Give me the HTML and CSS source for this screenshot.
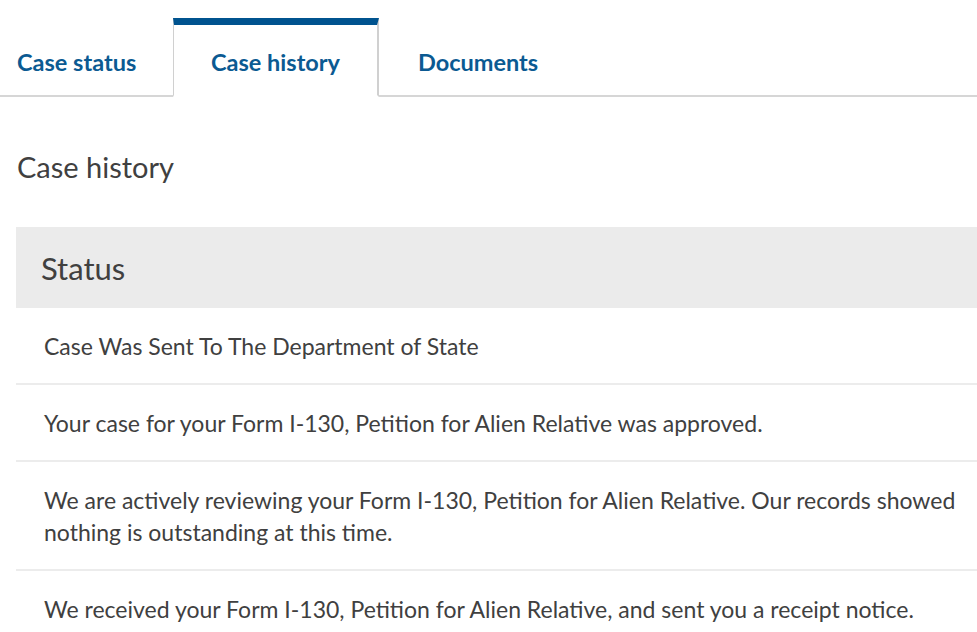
FILE: index.html
```html
<!DOCTYPE html>
<html lang="en">
<head>
<meta charset="utf-8">
<title>Case history</title>
<link rel="stylesheet" href="styles.css">
</head>
<body>
<nav class="tabs">
  <a class="tab tab-first" href="#">Case status</a>
  <a class="tab tab-active" href="#">Case history</a>
  <a class="tab tab-last" href="#">Documents</a>
  <span class="tab-fill"></span>
</nav>
<main class="content">
  <h2 class="page-title">Case history</h2>
  <section class="history">
    <div class="history-head">Status</div>
    <div class="history-row">Case Was Sent To The Department of State</div>
    <div class="history-row">Your case for your Form I-130, Petition for Alien Relative was approved.</div>
    <div class="history-row">We are actively reviewing your Form I-130, Petition for Alien Relative. Our records showed nothing is outstanding at this time.</div>
    <div class="history-row history-row-last">We received your Form I-130, Petition for Alien Relative, and sent you a receipt notice.</div>
  </section>
</main>
</body>
</html>
```

FILE: styles.css
```css
* { box-sizing: border-box; }
html, body { margin: 0; padding: 0; background: #fff; }
body {
  font-family: "Lato", "Liberation Sans", sans-serif;
  color: #404040;
  overflow: hidden;
}
.tabs {
  display: flex;
  align-items: stretch;
  padding-top: 18px;
  height: 97px;
}
.tab {
  display: flex;
  align-items: center;
  padding-top: 11px;
  color: #0b5a92;
  font-weight: 700;
  font-size: 23.5px;
  text-decoration: none;
  border-bottom: 2px solid #d6d6d6;
}
.tab-first { width: 173px; padding-left: 17px; }
.tab-active {
  width: 206px;
  justify-content: center;
  border-top: 7px solid #00538f;
  border-left: 1px solid #d0d0d0;
  border-right: 2px solid #d0d0d0;
  border-bottom: 2px solid transparent;
  padding-top: 4px;
}
.tab-last { padding-left: 39px; padding-right: 39px; }
.tab-fill { flex: 1; border-bottom: 2px solid #d6d6d6; }
.content { padding: 0 0 0 16px; }
.page-title {
  margin: 0;
  padding: 52px 0 0 1px;
  height: 130px;
  font-weight: 400;
  font-size: 29px;
  line-height: 36px;
  color: #404040;
}
.history-head {
  background: #ebebeb;
  height: 81px;
  display: flex;
  align-items: center;
  padding-left: 25px;
  font-size: 31px;
}
.history-row {
  padding: 22px 16px 21px 28px;
  font-size: 23px;
  line-height: 32px;
  border-bottom: 2px solid #ececec;
}
.history-row:first-of-type { padding-top: 23px; padding-bottom: 20px; }
.history-row-last { border-bottom: none; }
```
